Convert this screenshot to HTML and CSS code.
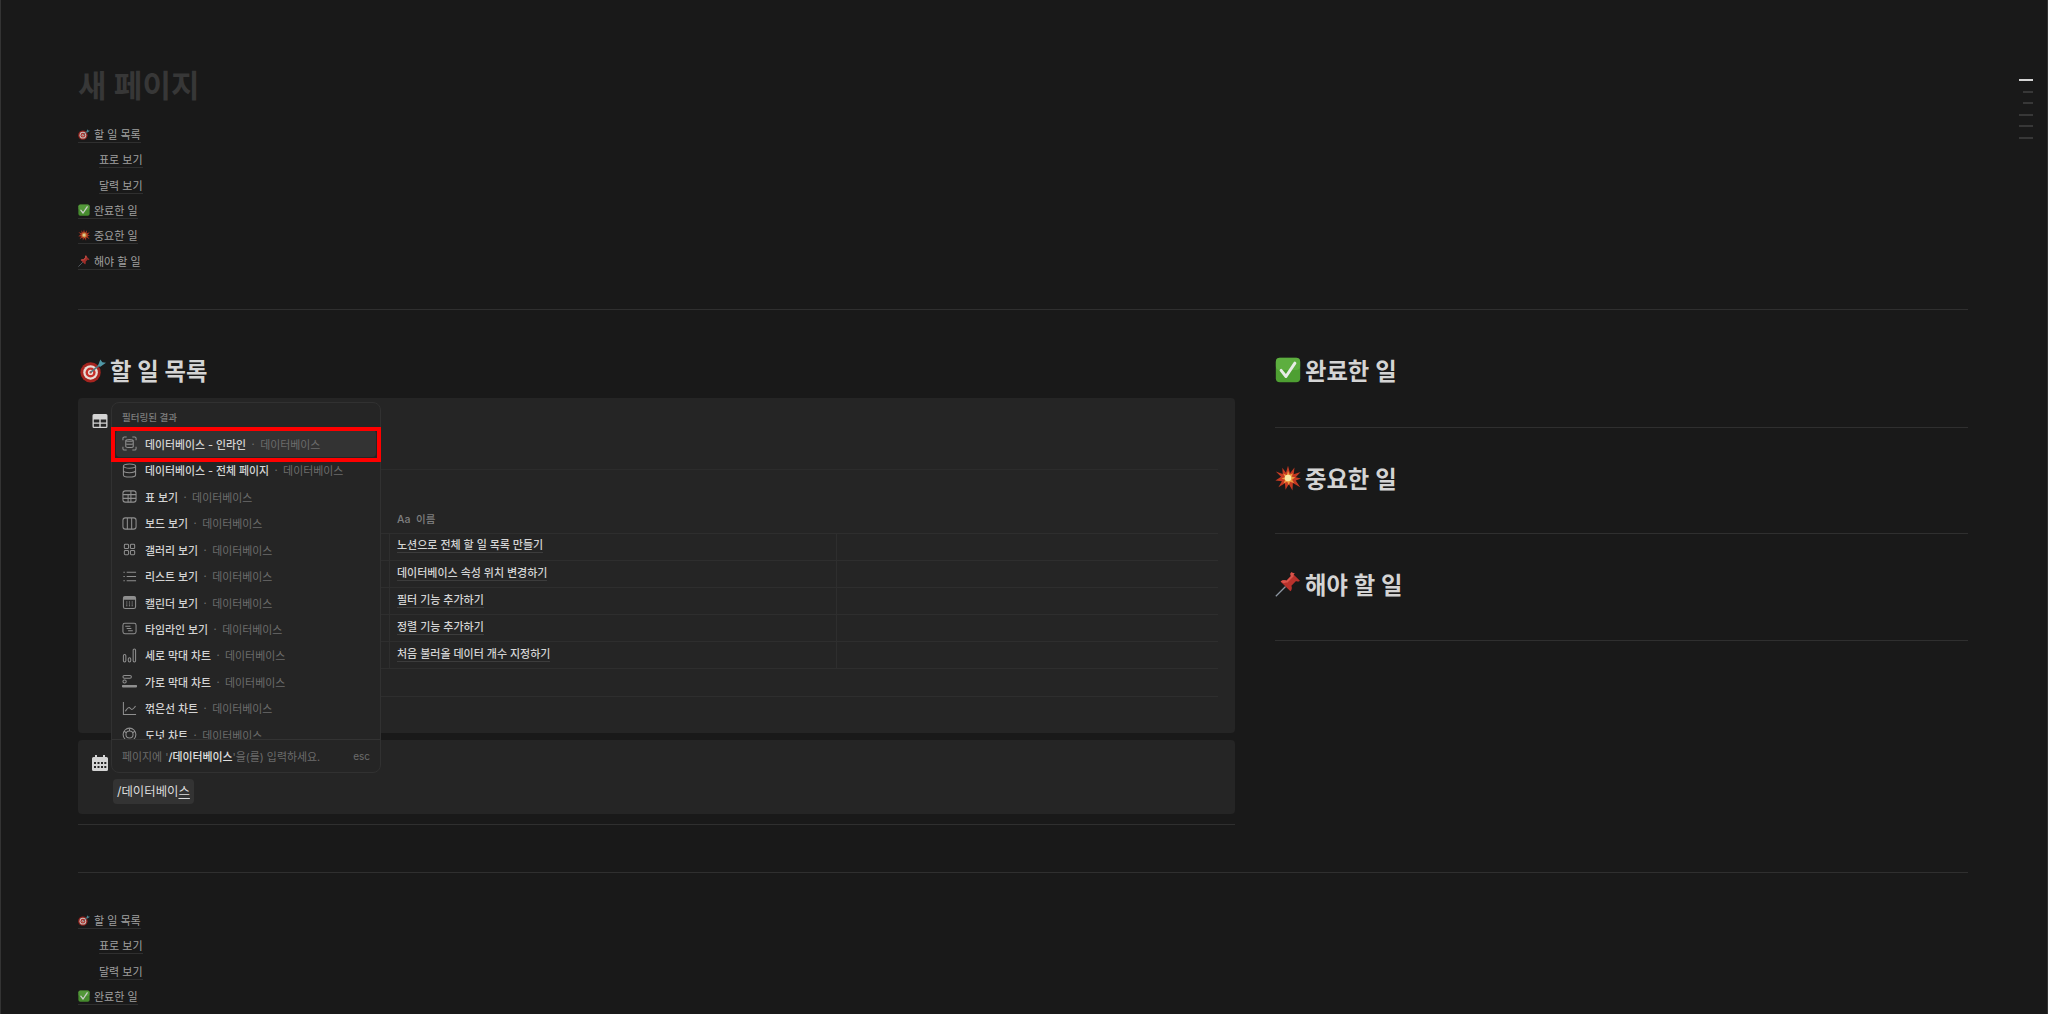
FILE: index.html
```html
<!DOCTYPE html>
<html lang="ko">
<head>
<meta charset="utf-8">
<title>새 페이지</title>
<link rel="stylesheet" href="styles.css">
</head>
<body>
<svg class="sprite" aria-hidden="true">
  <symbol id="e-dart" viewBox="0 0 32 32">
    <circle cx="13" cy="19" r="12.5" fill="#a5241f"/>
    <circle cx="13" cy="19" r="9" fill="#e9dcd6"/>
    <circle cx="13" cy="19" r="6.2" fill="#c8302a"/>
    <circle cx="13" cy="19" r="3.2" fill="#e9dcd6"/>
    <circle cx="13" cy="19" r="1.4" fill="#c8302a"/>
    <path d="M13 19 25 9" stroke="#53747c" stroke-width="2"/>
    <path d="M22 11l3-8 2.5 3.4L32 7l-7 5z" fill="#4f97a6"/>
  </symbol>
  <symbol id="e-check" viewBox="0 0 32 32">
    <rect x="1" y="1" width="30" height="30" rx="5" fill="#4e9f32"/>
    <rect x="1" y="1" width="30" height="15" rx="5" fill="#69b94a" opacity=".55"/>
    <path d="M7.5 16.5l6 7.5L24.5 7.5" fill="none" stroke="#e8ece6" stroke-width="3.6" stroke-linecap="round" stroke-linejoin="round"/>
  </symbol>
  <symbol id="e-boom" viewBox="0 0 32 32">
    <path d="M16 1l2.500 9 5.500-7-1 8.500 8.500-3-6 6.500 6.500 1.500-6.500 2.500 5.500 8.500-9-5.500-.5 9.500-4.500-8-4 7-.8-8-8 5 4.300-7.500-8-1 7-4.500L1 8l8.500 3-.5-7.500 4.500 6z" fill="#c53a22"/>
    <path d="M16 7l2 5 4-2-1.500 4.500 4.500.5-4 3 2.500 4-5-1.500-1.500 4.500-2-4.500-4.500 2 2-4.500-4.500-1.500 4.500-1.500-2.500-4.500 4.500 2z" fill="#ef9a3e"/>
    <circle cx="16" cy="16" r="4" fill="#f8e9a5"/>
  </symbol>
  <symbol id="e-pin" viewBox="0 0 32 32">
    <path d="M1 31 13 19" stroke="#8d97a3" stroke-width="1.600"/>
    <path d="M20 1.500c-1.500 1.500-1.200 3.500-.3 4.800L14 12c-2.500-1-5.500-.6-7 1.200L19 25c1.800-1.700 2.200-4.600 1.200-7l5.700-5.700c1.300.9 3.300 1.200 4.800-.3z" fill="#b8322c"/>
    <path d="M20 1.500c-1.500 1.500-1.200 3.500-.3 4.800L14 12c-2.500-1-5.500-.6-7 1.200l4 2c1.500-1 3-1 4-.8l8-8c-.6-1.500 0-3 1.500-3.400z" fill="#d9544b"/>
  </symbol>
</svg>

<main class="page">
  <h1 class="title">새 페이지</h1>

  <nav class="toc">
    <a class="toc-row"><span class="toc-link"><svg class="emoji"><use href="#e-dart"/></svg>할 일 목록</span></a>
    <a class="toc-row sub"><span class="toc-link">표로 보기</span></a>
    <a class="toc-row sub"><span class="toc-link">달력 보기</span></a>
    <a class="toc-row"><span class="toc-link"><svg class="emoji"><use href="#e-check"/></svg>완료한 일</span></a>
    <a class="toc-row"><span class="toc-link"><svg class="emoji"><use href="#e-boom"/></svg>중요한 일</span></a>
    <a class="toc-row"><span class="toc-link"><svg class="emoji"><use href="#e-pin"/></svg>해야 할 일</span></a>
  </nav>

  <hr class="rule rule-top">

  <div class="columns">
    <section class="col-left">
      <h2 class="heading"><svg class="h-emoji lead"><use href="#e-dart"/></svg>할 일 목록</h2>

      <div class="cards">
        <div class="card card-table">
          <svg class="card-icon" viewBox="0 0 16 16"><path fill="#d4d4d4" fill-rule="evenodd" d="M2 1h12a1.500 1.500 0 0 1 1.500 1.500v11A1.500 1.500 0 0 1 14 15H2A1.500 1.500 0 0 1 .5 13.500v-11A1.500 1.500 0 0 1 2 1zm-.2 5.500v3h5.500v-3zm6.900 0v3h5.500v-3zm-6.900 4.300v2.900h5.500v-2.900zm6.900 0v2.900h5.500v-2.900z"/></svg>
          <div class="card-body">
            <div class="view-bar"></div>
            <div class="tbl">
              <div class="tbl-head">Aa&nbsp; 이름</div>
              <div class="tbl-row"><div class="cell-a"></div><div class="cell-b"><span class="name">노션으로 전체 할 일 목록 만들기</span></div><div></div></div>
              <div class="tbl-row"><div class="cell-a"></div><div class="cell-b"><span class="name">데이터베이스 속성 위치 변경하기</span></div><div></div></div>
              <div class="tbl-row"><div class="cell-a"></div><div class="cell-b"><span class="name">필터 기능 추가하기</span></div><div></div></div>
              <div class="tbl-row"><div class="cell-a"></div><div class="cell-b"><span class="name">정렬 기능 추가하기</span></div><div></div></div>
              <div class="tbl-row"><div class="cell-a"></div><div class="cell-b"><span class="name">처음 불러올 데이터 개수 지정하기</span></div><div></div></div>
              <div class="tbl-new"></div>
            </div>
          </div>
        </div>

        <div class="card card-cal">
          <svg class="card-icon" viewBox="0 0 16 16"><path fill="#d4d4d4" fill-rule="evenodd" d="M3 0h2v2h6V0h2v2h1.500A1.500 1.500 0 0 1 16 3.500v11a1.500 1.500 0 0 1-1.500 1.500h-13A1.500 1.500 0 0 1 0 14.500v-11A1.500 1.500 0 0 1 1.500 2H3zM2 7v2h2V7zm3.500 0v2h2V7zm3.500 0v2h2V7zm3.300 0v2h2V7zM2 11v2h2v-2zm3.500 0v2h2v-2zm3.500 0v2h2v-2zm3.300 0v2h2v-2z"/></svg>
          <div class="card-body">
            <span class="pill">/데이터베이<span class="composing">스</span></span>
          </div>
        </div>

        <div class="popup">
          <div class="popup-scroll">
            <div class="popup-label">필터링된 결과</div>
            <div class="item active">
              <svg class="i" viewBox="0 0 16 16"><path d="M1 4.500V2.500A1.500 1.500 0 0 1 2.500 1H5M11 1h2.500A1.500 1.500 0 0 1 15 2.500v2M15 11.500v2a1.500 1.500 0 0 1-1.500 1.500H11M5 15H2.500A1.500 1.500 0 0 1 1 13.500v-2"/><path d="M4 4.800C4 3.300 12 3.300 12 4.800v6.400c0 1.500-8 1.500-8 0zM4 8c0 1.200 8 1.200 8 0M4 4.800c0 1.200 8 1.200 8 0"/></svg>
              <b>데이터베이스 - 인라인</b><span class="dot">·</span><span class="cat">데이터베이스</span>
            </div>
            <div class="item">
              <svg class="i" viewBox="0 0 16 16"><ellipse cx="8" cy="3.300" rx="6.500" ry="2.300"/><path d="M1.500 3.300v9.400C1.500 14 4.400 15 8 15s6.500-1 6.500-2.300V3.300M1.500 8c0 1.300 2.900 2.300 6.500 2.300s6.500-1 6.500-2.300"/></svg>
              <b>데이터베이스 - 전체 페이지</b><span class="dot">·</span><span class="cat">데이터베이스</span>
            </div>
            <div class="item">
              <svg class="i" viewBox="0 0 16 16"><rect x="1" y="2" width="14" height="12" rx="2.500"/><path d="M1 6h14M1 10h14M6.500 6v8M9.500 2v12" stroke-dasharray="none"/></svg>
              <b>표 보기</b><span class="dot">·</span><span class="cat">데이터베이스</span>
            </div>
            <div class="item">
              <svg class="i" viewBox="0 0 16 16"><rect x="1" y="2" width="14" height="12" rx="2.500"/><path d="M5.700 2v12M10.300 2v12"/></svg>
              <b>보드 보기</b><span class="dot">·</span><span class="cat">데이터베이스</span>
            </div>
            <div class="item">
              <svg class="i" viewBox="0 0 16 16"><rect x="2.500" y="2.500" width="4.500" height="4.500" rx="1"/><rect x="9" y="2.500" width="4.500" height="4.500" rx="1"/><rect x="2.500" y="9" width="4.500" height="4.500" rx="1"/><rect x="9" y="9" width="4.500" height="4.500" rx="1"/></svg>
              <b>갤러리 보기</b><span class="dot">·</span><span class="cat">데이터베이스</span>
            </div>
            <div class="item">
              <svg class="i" viewBox="0 0 16 16"><path d="M1.500 3.500h1.500M5 3.500h10M1.500 8h1.500M5 8h10M1.500 12.500h1.500M5 12.500h10"/></svg>
              <b>리스트 보기</b><span class="dot">·</span><span class="cat">데이터베이스</span>
            </div>
            <div class="item">
              <svg class="i" viewBox="0 0 16 16"><path class="fill" d="M3 1.500h10A1.500 1.500 0 0 1 14.500 3v2h-13V3A1.500 1.500 0 0 1 3 1.500z"/><rect x="1.500" y="1.500" width="13" height="13" rx="2"/><path d="M4.500 7.500h1.200M7.400 7.500h1.200M10.300 7.500h1.200M4.500 9.500h1.200M7.400 9.500h1.200M10.300 9.500h1.200M4.500 11.500h1.200M7.400 11.500h1.200M10.300 11.500h1.200"/></svg>
              <b>캘린더 보기</b><span class="dot">·</span><span class="cat">데이터베이스</span>
            </div>
            <div class="item">
              <svg class="i" viewBox="0 0 16 16"><rect x="1" y="2.500" width="14" height="11" rx="2"/><path d="M3.500 5.500H9M5 8h5M6.500 10.500h5"/></svg>
              <b>타임라인 보기</b><span class="dot">·</span><span class="cat">데이터베이스</span>
            </div>
            <div class="item">
              <svg class="i" viewBox="0 0 16 16"><rect x="1.500" y="7" width="2.600" height="8" rx="1.300"/><rect x="6.700" y="10.500" width="2.600" height="4.500" rx="1.300"/><rect x="11.900" y="1" width="2.600" height="14" rx="1.300"/></svg>
              <b>세로 막대 차트</b><span class="dot">·</span><span class="cat">데이터베이스</span>
            </div>
            <div class="item">
              <svg class="i" viewBox="0 0 16 16"><rect x="1" y="1.500" width="9" height="3" rx="1.500"/><rect x="1" y="6.500" width="3.500" height="3" rx="1.500"/><path class="thick" d="M1 13h14"/></svg>
              <b>가로 막대 차트</b><span class="dot">·</span><span class="cat">데이터베이스</span>
            </div>
            <div class="item">
              <svg class="i" viewBox="0 0 16 16"><path d="M1.500 1v13.500H15M3.500 11c1.500-2 2.500-4 4-4s1.500 2 3 2 2.500-2 4-3.500"/></svg>
              <b>꺾은선 차트</b><span class="dot">·</span><span class="cat">데이터베이스</span>
            </div>
            <div class="item">
              <svg class="i" viewBox="0 0 16 16"><circle cx="8" cy="8" r="6.800"/><circle cx="8" cy="8" r="3.800"/><path d="M8 1.200v3M11.300 6.100l2.600-1.500M4.700 6.100 2.100 4.600"/></svg>
              <b>도넛 차트</b><span class="dot">·</span><span class="cat">데이터베이스</span>
            </div>
          </div>
          <div class="popup-foot">
            <span>페이지에 '<strong>/데이터베이스</strong>'을(를) 입력하세요.</span>
            <span class="esc">esc</span>
          </div>
          <div class="marker"></div>
        </div>
      </div>

      <hr class="rule rule-cards">
    </section>

    <section class="col-right">
      <div class="block"><h2 class="heading"><svg class="h-emoji"><use href="#e-check"/></svg>완료한 일</h2></div>
      <div class="block"><h2 class="heading"><svg class="h-emoji"><use href="#e-boom"/></svg>중요한 일</h2></div>
      <div class="block"><h2 class="heading"><svg class="h-emoji"><use href="#e-pin"/></svg>해야 할 일</h2></div>
    </section>
  </div>

  <hr class="rule rule-bottom">

  <nav class="toc">
    <a class="toc-row"><span class="toc-link"><svg class="emoji"><use href="#e-dart"/></svg>할 일 목록</span></a>
    <a class="toc-row sub"><span class="toc-link">표로 보기</span></a>
    <a class="toc-row sub"><span class="toc-link">달력 보기</span></a>
    <a class="toc-row"><span class="toc-link"><svg class="emoji"><use href="#e-check"/></svg>완료한 일</span></a>
  </nav>

  <div class="outline">
    <i class="on"></i><i class="short"></i><i class="short"></i><i></i><i></i><i></i>
  </div>
</main>
</body>
</html>
```

FILE: styles.css
```css
* { box-sizing: border-box; }
html, body { margin: 0; height: 100%; }
body {
  background: #191919;
  color: #d4d4d4;
  font-family: "Inter", "Noto Sans CJK KR", "Noto Sans", sans-serif;
  overflow: hidden;
}
.sprite { position: absolute; width: 0; height: 0; }

.page {
  position: relative;
  height: 1014px;
  padding: 66px 79px 0 77px;
  border-left: 1px solid #333;
  border-right: 1px solid #333;
  overflow: hidden;
}

.title {
  margin: 0 0 16px;
  font-size: 31px;
  line-height: 40px;
  font-weight: 700;
  color: #373737;
}

.toc { display: flex; flex-direction: column; }
.toc-row { height: 25.33px; display: flex; align-items: center; font-size: 11px; color: #a0a0a0; }
.toc-row.sub { padding-left: 21px; }
.toc-link {
  display: inline-flex;
  align-items: center;
  height: 17px;
  border-bottom: 1px solid #2f2f2f;
}
.emoji { width: 12px; height: 12px; margin: 0 4px 0 0; opacity: .85; }

.rule { margin: 0; border: 0; height: 1px; background: #2f2f2f; }
.rule-top { margin-top: 35px; }
.rule-bottom { margin-top: 47px; margin-bottom: 35px; }

.columns {
  display: grid;
  grid-template-columns: 1157px 693px;
  column-gap: 40px;
  padding-top: 45px;
}

.heading {
  display: flex;
  align-items: center;
  margin: 0;
  height: 32px;
  padding-bottom: 2px;
  font-size: 23.3px;
  font-weight: 600;
  color: #d4d4d4;
}
.h-emoji { width: 26px; height: 26px; margin-right: 4px; flex: none; }
.h-emoji.lead { margin-left: 2px; }

.cards { position: relative; margin-top: 11px; }

.card { display: flex; background: #252525; border-radius: 4px; }
.card-icon { width: 16px; height: 16px; flex: none; margin: 15px 5px 0 14px; }
.card-body { flex: 1; min-width: 0; }

.card-table { height: 335px; }
.card-table .card-body { padding-right: 17px; }
.view-bar { height: 72px; border-bottom: 1px solid #2c2c2c; }
.tbl-head {
  height: 63px;
  padding: 36px 0 0 284px;
  font-size: 10.5px;
  line-height: 27px;
  color: #7f7f7f;
  font-weight: 500;
}
.tbl-row {
  display: grid;
  grid-template-columns: 277px 447px 1fr;
  height: 27.06px;
  border-top: 1px solid #2e2e2e;
}
.cell-a { border-right: 1px solid #2e2e2e; }
.cell-b {
  display: flex;
  align-items: center;
  padding: 0 0 2px 7px;
  border-right: 1px solid #2e2e2e;
}
.name {
  font-size: 11px;
  font-weight: 500;
  color: #d4d4d4;
  line-height: 14px;
  border-bottom: 1px solid #3c3c3c;
}
.tbl-new { height: 29px; border-top: 1px solid #2e2e2e; border-bottom: 1px solid #2e2e2e; }

.card-cal { height: 74px; margin-top: 7px; }
.card-cal .card-icon { margin-top: 15px; }
.card-cal .card-body { padding-top: 39px; }
.pill {
  display: inline-block;
  height: 25px;
  padding: 0 4px;
  border-radius: 4px;
  background: #333;
  font-size: 12.4px;
  line-height: 25px;
  color: #dcdcdc;
}
.composing { text-decoration: underline; text-underline-offset: 2px; }

.rule-cards { margin-top: 10px; }

.block { height: 106.5px; padding-top: 35px; border-bottom: 1px solid #2f2f2f; }
.block:first-child { height: 73px; padding-top: 0; }

.popup {
  position: absolute;
  left: 33px;
  top: 4px;
  width: 270px;
  height: 371px;
  display: flex;
  flex-direction: column;
  background: #252525;
  border: 1px solid #313131;
  border-radius: 8px;
}
.popup-scroll { flex: 1; min-height: 0; overflow: hidden; padding: 0 4px; }
.popup-label {
  height: 27.5px;
  padding-left: 6px;
  font-size: 9.5px;
  line-height: 30px;
  font-weight: 500;
  color: #7f7f7f;
}
.item {
  display: flex;
  align-items: center;
  height: 26.47px;
  padding-left: 6px;
  font-size: 10.9px;
  white-space: nowrap;
}
.item b { font-weight: 500; color: #d4d4d4; }
.item.active { background: #333; border-radius: 4px; }
.dot { margin: 0 5.500px; color: #707070; }
.cat { color: #6c6c6c; }
.i {
  width: 15px;
  height: 15px;
  flex: none;
  margin-right: 8px;
  fill: none;
  stroke: #8f8f8f;
  stroke-width: 1.100;
}
.i .fill { fill: #8f8f8f; stroke: none; }
.i .thick { stroke-width: 2.600; stroke-linecap: round; }

.popup-foot {
  display: flex;
  justify-content: space-between;
  align-items: center;
  height: 33px;
  padding: 0 10px;
  border-top: 1px solid #333;
  font-size: 10.9px;
  color: #6c6c6c;
}
.popup-foot strong { font-weight: 500; color: #e0e0e0; }
.esc { font-size: 10px; }

.marker {
  position: absolute;
  left: -1px;
  right: -1px;
  top: 24px;
  height: 35px;
  border: 4px solid #f00;
  pointer-events: none;
}

.outline {
  position: absolute;
  right: 14px;
  top: 79px;
  display: flex;
  flex-direction: column;
  align-items: flex-end;
  gap: 9.5px;
}
.outline i { display: block; width: 14px; height: 2px; background: #373737; }
.outline i.short { width: 10px; }
.outline i.on { background: #d4d4d4; }
```
